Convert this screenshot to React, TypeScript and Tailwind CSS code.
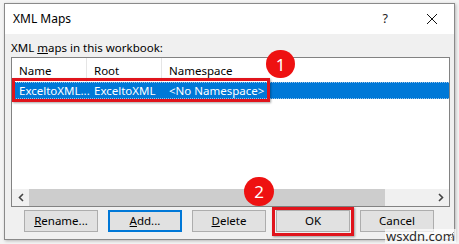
import React from "react";

const font = { fontFamily: '"Noto Sans", "Open Sans", sans-serif' };

function Btn({ children, focused }: { children: React.ReactNode; focused?: boolean }) {
  return (
    <div
      className={
        "w-[74px] h-[22px] flex items-center justify-center text-[11.5px] leading-[14px] text-black bg-[#e1e1e1] " +
        (focused ? "border-2 border-[#0078d7]" : "border border-[#adadad]")
      }
    >
      {children}
    </div>
  );
}

export default function App() {
  return (
    <div className="relative w-[459px] h-[244px] bg-[#f4f4f4] overflow-hidden" style={font}>
      <div className="absolute left-[4px] top-[3px] w-[451px] h-[237px] border border-[#8a8a8a] bg-[#f0f0f0] flex flex-col shadow-[1px_1px_3px_rgba(0,0,0,0.25)]">
        {/* title bar */}
        <div className="h-[30px] bg-white flex items-center pl-[8px] pr-[12px] shrink-0">
          <span className="text-[12px] text-black leading-none">XML Maps</span>
          <div className="flex-1" />
          <span className="text-[12.5px] text-[#222] leading-none mr-[38px]">?</span>
          <svg width="12" height="12" viewBox="0 0 12 12" className="mr-[4px]">
            <path d="M1 1 L11 11 M11 1 L1 11" stroke="#111" strokeWidth="1" />
          </svg>
        </div>
        {/* body */}
        <div className="flex flex-col px-[6px] pt-[7px]">
          <div className="text-[11.5px] text-black leading-[14px] h-[16px]">
            XML <span className="underline">m</span>aps in this workbook:
          </div>
          <div className="w-[439px] h-[150px] border border-[#828282] bg-white flex flex-col">
            <div className="h-[24px] flex text-[11.5px] leading-[14px] text-black shrink-0">
              <div className="w-[75px] pl-[7px] pt-[6px] border-r border-[#e5e5e5]">Name</div>
              <div className="w-[75px] pl-[7px] pt-[6px] border-r border-[#e5e5e5]">Root</div>
              <div className="flex-1 pl-[7px] pt-[6px]">Namespace</div>
            </div>
            <div className="h-[17px] flex items-center bg-[#0078d7] text-white text-[11.5px] leading-[14px] border-y border-dotted border-[#9cc3e6] shrink-0">
              <div className="w-[75px] pl-[7px] whitespace-nowrap">ExceltoXML...</div>
              <div className="w-[75px] pl-[7px] whitespace-nowrap">ExceltoXML</div>
              <div className="flex-1 pl-[7px] whitespace-nowrap">&lt;No Namespace&gt;</div>
            </div>
            <div className="flex-1" />
            <div className="h-[17px] flex items-center bg-[#f0f0f0] shrink-0">
              <div className="w-[17px] h-[17px] flex items-center justify-center">
                <svg width="6" height="9" viewBox="0 0 6 9">
                  <path d="M5 1 L1.5 4.5 L5 8" stroke="#444" strokeWidth="1.6" fill="none" />
                </svg>
              </div>
              <div className="w-[356px] h-[17px] bg-[#cdcdcd]" />
              <div className="flex-1" />
              <div className="w-[17px] h-[17px] flex items-center justify-center">
                <svg width="6" height="9" viewBox="0 0 6 9">
                  <path d="M1 1 L4.5 4.5 L1 8" stroke="#444" strokeWidth="1.6" fill="none" />
                </svg>
              </div>
            </div>
          </div>
          <div className="mt-[3px] flex gap-[10px] pl-[13px]">
            <Btn>
              <span className="underline">R</span>ename...
            </Btn>
            <Btn focused>
              <span className="underline">A</span>dd...
            </Btn>
            <Btn>
              <span className="underline">D</span>elete
            </Btn>
            <Btn>OK</Btn>
            <Btn>Cancel</Btn>
          </div>
        </div>
      </div>

      {/* annotations */}
      <div className="absolute left-[12px] top-[78px] w-[258px] h-[24px] border-[3px] border-[#e0141c] shadow-[1px_1px_2px_rgba(0,0,0,0.35)]" />
      <div className="absolute left-[272px] top-[207px] w-[82px] h-[29px] border-[3px] border-[#e0141c] shadow-[1px_1px_2px_rgba(0,0,0,0.35)]" />
      <div className="absolute left-[266px] top-[50px] w-[29px] h-[28px] rounded-full bg-[#ee1111] flex items-center justify-center text-white text-[17px] leading-none">
        1
      </div>
      <div className="absolute left-[244px] top-[177px] w-[30px] h-[29px] rounded-full bg-[#ee1111] flex items-center justify-center text-white text-[17px] leading-none">
        2
      </div>
      <div className="absolute left-[385px] top-[229px] text-[13px] leading-[14px] text-[#2a2a2a] bg-[rgba(255,255,255,0.7)] px-[1px]">
        wsxdn.com
      </div>
      <svg className="absolute left-[447px] top-[231px]" width="8" height="8" viewBox="0 0 8 8">
        <path d="M7 1 L1 7 M7 4 L4 7" stroke="#999" strokeWidth="1" />
      </svg>
    </div>
  );
}
